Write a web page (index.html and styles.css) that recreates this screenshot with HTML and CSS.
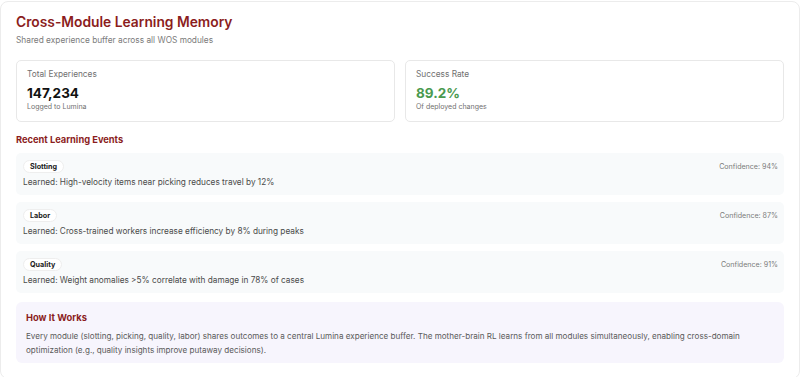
FILE: index.html
```html
<!DOCTYPE html>
<html lang="en">
<head>
  <meta charset="UTF-8">
  <meta name="viewport" content="width=device-width, initial-scale=1.0">
  <title>Cross-Module Learning Memory</title>
  <link rel="stylesheet" href="styles.css">
</head>
<body>
  <div class="panel">
    <!-- Header -->
    <h1>Cross-Module Learning Memory</h1>
    <p class="subtitle">Shared experience buffer across all WOS modules</p>

    <!-- Stats -->
    <div class="stats">
      <div class="stat-card">
        <div class="stat-label">Total Experiences</div>
        <div class="stat-value">147,234</div>
        <div class="stat-sub">Logged to Lumina</div>
      </div>
      <div class="stat-card">
        <div class="stat-label">Success Rate</div>
        <div class="stat-value green">89.2%</div>
        <div class="stat-sub">Of deployed changes</div>
      </div>
    </div>

    <!-- Events -->
    <h2>Recent Learning Events</h2>
    <div class="events">
      <div class="event">
        <div class="event-top">
          <span class="badge">Slotting</span>
          <span class="confidence">Confidence: 94%</span>
        </div>
        <p>Learned: High-velocity items near picking reduces travel by 12%</p>
      </div>
      <div class="event">
        <div class="event-top">
          <span class="badge">Labor</span>
          <span class="confidence">Confidence: 87%</span>
        </div>
        <p>Learned: Cross-trained workers increase efficiency by 8% during peaks</p>
      </div>
      <div class="event">
        <div class="event-top">
          <span class="badge">Quality</span>
          <span class="confidence">Confidence: 91%</span>
        </div>
        <p>Learned: Weight anomalies &gt;5% correlate with damage in 78% of cases</p>
      </div>
    </div>

    <!-- Info -->
    <div class="info">
      <h3>How It Works</h3>
      <p>Every module (slotting, picking, quality, labor) shares outcomes to a central Lumina experience buffer. The mother-brain RL learns from all modules simultaneously, enabling cross-domain optimization (e.g., quality insights improve putaway decisions).</p>
    </div>
  </div>
</body>
</html>
```

FILE: styles.css
```css
/* General reset */
* {
  margin: 0;
  padding: 0;
  box-sizing: border-box;
}
body {
  font-family: 'Inter', 'Liberation Sans', sans-serif;
  background-color: #fff;
  color: #333;
}
.panel {
  margin-top: 1px;
  padding: 11px 15px 15px;
  border: 1px solid #ececec;
  border-radius: 8px;
  background-color: #fff;
}

h1 {
  font-size: 13.8px;
  font-weight: 600;
  color: #8b1d1d;
  line-height: 18px;
}
.subtitle {
  font-size: 8.3px;
  color: #7a7a7a;
  margin-top: 4px;
  line-height: 11px;
}

.stats {
  display: grid;
  grid-template-columns: 1fr 1fr;
  gap: 10px;
  margin-top: 14px;
}
.stat-card {
  border: 1px solid #e8e8e8;
  border-radius: 5px;
  padding: 8px 10px 0;
  height: 62px;
}
.stat-label {
  font-size: 8.3px;
  color: #707070;
  line-height: 11px;
}
.stat-value {
  font-size: 13.5px;
  font-weight: 700;
  color: #111;
  line-height: 18px;
  margin-top: 4px;
}
.stat-value.green {
  color: #4a9a4f;
}
.stat-sub {
  font-size: 7px;
  color: #707070;
  line-height: 10px;
}

h2 {
  font-size: 9.3px;
  font-weight: 700;
  color: #8b1d1d;
  margin-top: 12px;
  line-height: 12px;
}

.events {
  display: flex;
  flex-direction: column;
  gap: 7px;
  margin-top: 7px;
}
.event {
  background-color: #f8fafb;
  border-radius: 5px;
  padding: 7px 6px 0 7px;
  height: 42px;
}
.event-top {
  display: flex;
  justify-content: space-between;
  align-items: center;
  height: 13px;
}
.badge {
  font-size: 7.2px;
  font-weight: 700;
  color: #222;
  background-color: #fff;
  border: 1px solid #eee;
  border-radius: 7px;
  padding: 0 6px;
  line-height: 11px;
}
.confidence {
  font-size: 7.1px;
  color: #7a7a7a;
}
.event p {
  font-size: 8.25px;
  color: #4a4a4a;
  margin-top: 3px;
  line-height: 12px;
}

.info {
  margin-top: 9px;
  background-color: #f7f5fd;
  border-radius: 6px;
  padding: 10px 10px 6px;
  height: 61px;
}
.info h3 {
  font-size: 9.4px;
  font-weight: 700;
  color: #8b1d1d;
  line-height: 12px;
}
.info p {
  font-size: 8.1px;
  color: #5a5a5a;
  line-height: 14px;
  margin-top: 5px;
}
```
